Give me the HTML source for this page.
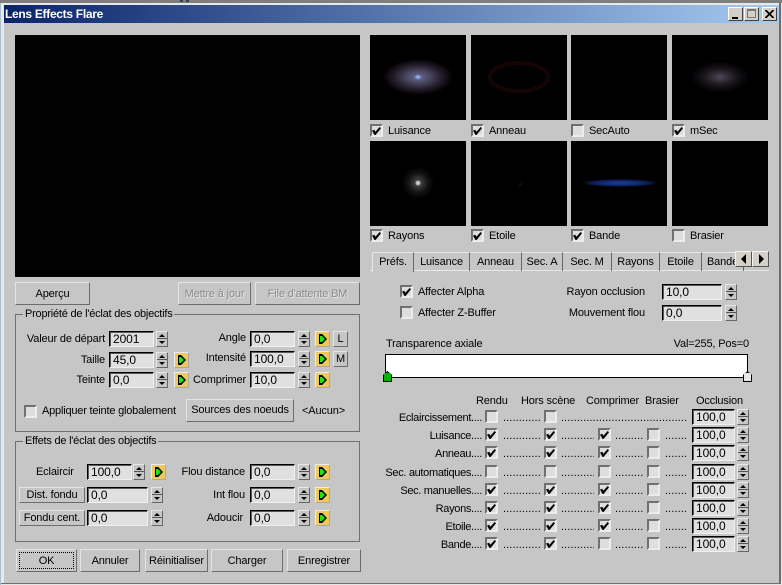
<!DOCTYPE html>
<html><head><meta charset="utf-8"><title>Lens Effects Flare</title>
<style>
html,body{margin:0;padding:0;background:#c6c6c6}
body{position:relative;width:782px;height:585px;overflow:hidden;font:11px "Liberation Sans",sans-serif;color:#000;letter-spacing:-.15px}
div,span,i,b,u{position:absolute;display:block;box-sizing:border-box;font-style:normal;font-weight:normal;text-decoration:none}
.t{white-space:nowrap;line-height:14px;height:14px}
.r{text-align:right}
.w{margin-top:1px;letter-spacing:-.32px}
.bk{background:#000}
.btn{background:#c6c6c6;border:1px solid;border-color:#e4e4e4 #6c6c6c #6c6c6c #e4e4e4;text-align:center;white-space:nowrap;height:23px;line-height:22px}
.dis{color:#8a8a8a;text-shadow:1px 1px 0 #e8e8e8}
.sm{height:16px;line-height:14px}
.f{height:16px;background:#e0e0e0;border:1px solid;border-color:#000 #f0f0f0 #f0f0f0 #000;box-shadow:inset 1px 1px 0 #5a5a5a;line-height:15px;padding-left:3px;font-size:12px;letter-spacing:-.1px;white-space:nowrap;overflow:hidden}
.s{width:12px;height:16px;background:linear-gradient(#c6c6c6 0,#c6c6c6 6px,#555 6px,#555 7px,#c6c6c6 7px);border:1px solid;border-color:#e8e8e8 #666 #666 #e8e8e8}
.s::before{content:"";position:absolute;left:2px;top:2px;border:3px solid transparent;border-top:0;border-bottom:3px solid #000}
.s::after{content:"";position:absolute;left:2px;bottom:2px;border:3px solid transparent;border-bottom:0;border-top:3px solid #000}
.a{width:15px;height:16px;background:#f0c860;border:1px solid;border-color:#ececec #a8a8a8 #a8a8a8 #ececec}
.a::before{content:"";position:absolute;left:3px;top:2px;width:8px;height:10px;background:#000;clip-path:polygon(0 0,40% 0,100% 50%,40% 100%,0 100%)}
.a::after{content:"";position:absolute;left:4px;top:4px;width:5px;height:6px;background:#18e818;clip-path:polygon(0 0,40% 0,100% 50%,40% 100%,0 100%)}
.c{width:13px;height:13px;background:#dedede;border:2px solid;border-color:#707070 #ececec #ececec #707070}
.c.on::after{content:"";position:absolute;left:0;top:1px;width:9px;height:8px;background:#000;clip-path:polygon(0 45%,25% 35%,38% 60%,85% 0,100% 15%,40% 100%,28% 100%)}
.g{border:1px solid #707070}
.lg{background:#c6c6c6;padding:0 2px;left:7px;top:-8px;letter-spacing:-.22px}
.tab{height:19px;top:252px;line-height:18px;text-align:center;border-top:1px solid #e8e8e8;border-left:1px solid #e8e8e8;border-right:1px solid #666;white-space:nowrap;overflow:hidden;border-radius:2px 2px 0 0}
.d{margin-top:1px;letter-spacing:.1px;overflow:hidden;white-space:nowrap;line-height:14px;height:14px}
.ar{background:#d4d0c8;border:1px solid;border-color:#f4f4f4 #555 #555 #f4f4f4;width:17px;height:16px;top:251px}
</style></head><body>
<!-- window frame -->
<div style="left:0;top:0;width:782px;height:3px;background:#7e7e7e"></div>
<div style="left:180px;top:0;width:3px;height:2px;background:#3c3c50"></div>
<div style="left:186px;top:0;width:3px;height:2px;background:#3c3c50"></div>
<div style="left:1px;top:3px;width:778px;height:2px;background:#e8e8e8"></div>
<div style="left:1px;top:3px;width:3px;height:580px;background:#e8e8e8"></div>
<div style="left:0;top:3px;width:1px;height:582px;background:#a8c0c8"></div>
<div style="left:779px;top:3px;width:2px;height:581px;background:#6e6e6e"></div>
<div style="left:781px;top:3px;width:1px;height:582px;background:#e4e4e4"></div>
<div style="left:1px;top:583px;width:780px;height:1px;background:#6e6e6e"></div>
<div style="left:1px;top:584px;width:781px;height:1px;background:#e4e4e4"></div>
<!-- title -->
<div style="left:4px;top:5px;width:775px;height:18px;background:linear-gradient(90deg,#0a246a,#a6caf0)"></div>
<div class="t" style="left:5px;top:7px;color:#fff;font-weight:bold;font-size:12px;letter-spacing:-.3px">Lens Effects Flare</div>
<div style="left:728px;top:7px;width:15px;height:14px;background:#d4d0c8;border:1px solid;border-color:#fff #404040 #404040 #fff"><span style="left:3px;top:9px;width:6px;height:2px;background:#000"></span></div>
<div style="left:744px;top:7px;width:15px;height:14px;background:#d4d0c8;border:1px solid;border-color:#fff #404040 #404040 #fff"><span style="left:2px;top:1px;width:9px;height:9px;border:1px solid #777;border-top-width:2px"></span></div>
<div style="left:762px;top:7px;width:15px;height:14px;background:#d4d0c8;border:1px solid;border-color:#fff #404040 #404040 #fff"><svg style="position:absolute;left:2px;top:2px" width="9" height="8"><path d="M0 0L8 8M1 0L9 8M8 0L0 8M9 0L1 8" stroke="#000" stroke-width="1"/></svg></div>

<!-- preview -->
<div class="bk" style="left:15px;top:35px;width:345px;height:242px;background:#020202"></div>

<!-- thumbs -->
<div class="bk" style="left:370px;top:35px;width:96px;height:85px;background:radial-gradient(ellipse 4px 3px at 48px 42px,#a8d0f0 0,rgba(120,150,210,.7) 60%,transparent 100%),radial-gradient(ellipse 35px 18px at 48px 42px,#7070a0 0,#5c5a80 15%,#454258 38%,#26202e 65%,#0e0a10 88%,#000 100%)"></div>
<div class="bk" style="left:471px;top:35px;width:96px;height:85px"><svg width="96" height="85" style="position:absolute;left:0;top:0"><ellipse cx="48" cy="42" rx="29" ry="14" fill="none" stroke="#140404" stroke-width="4"/></svg></div>
<div class="bk" style="left:571px;top:35px;width:96px;height:85px"></div>
<div class="bk" style="left:672px;top:35px;width:96px;height:85px;background:radial-gradient(ellipse 30px 16px at 48px 42px,#4a4a62 0,#38343f 20%,#1c181e 50%,#0a080c 78%,#000 100%)"></div>
<div class="bk" style="left:370px;top:141px;width:96px;height:85px;background:radial-gradient(circle 3px at 48px 42px,#e8e8e8 0,#b0b0b0 60%,transparent 100%),radial-gradient(circle 16px at 48px 42px,#606060 0,#383838 25%,#141414 60%,#000 100%)"></div>
<div class="bk" style="left:471px;top:141px;width:96px;height:85px"><span style="left:48px;top:42px;width:3px;height:3px;background:#0e0e0e"></span></div>
<div class="bk" style="left:571px;top:141px;width:96px;height:85px;background:radial-gradient(ellipse 38px 4px at 49px 42px,#1c3c90 0,#14307c 40%,#0a1a4a 78%,#000 100%)"></div>
<div class="bk" style="left:672px;top:141px;width:96px;height:85px"></div>

<i class="c on" style="left:370px;top:124px"></i><div class="t" style="left:388px;top:124px">Luisance</div>
<i class="c on" style="left:471px;top:124px"></i><div class="t" style="left:489px;top:124px">Anneau</div>
<i class="c" style="left:571px;top:124px"></i><div class="t" style="left:589px;top:124px">SecAuto</div>
<i class="c on" style="left:672px;top:124px"></i><div class="t" style="left:690px;top:124px">mSec</div>
<i class="c on" style="left:370px;top:229px"></i><div class="t" style="left:388px;top:229px">Rayons</div>
<i class="c on" style="left:471px;top:229px"></i><div class="t" style="left:489px;top:229px">Etoile</div>
<i class="c on" style="left:571px;top:229px"></i><div class="t" style="left:589px;top:229px">Bande</div>
<i class="c" style="left:672px;top:229px"></i><div class="t" style="left:690px;top:229px">Brasier</div>

<!-- tabs -->
<div style="left:370px;top:270px;width:399px;height:1px;background:#e8e8e8"></div>
<div class="tab" style="left:372px;width:42px;height:20px;background:#c6c6c6">Préfs.</div>
<div class="tab" style="left:414px;width:56px;border-left:0">Luisance</div>
<div class="tab" style="left:470px;width:52px;border-left:0">Anneau</div>
<div class="tab" style="left:522px;width:41px;border-left:0">Sec. A</div>
<div class="tab" style="left:563px;width:49px;border-left:0">Sec. M</div>
<div class="tab" style="left:612px;width:48px;border-left:0">Rayons</div>
<div class="tab" style="left:660px;width:42px;border-left:0">Etoile</div>
<div class="tab" style="left:702px;width:42px;border-left:0;text-align:left;padding-left:5px">Bande</div>
<div class="ar" style="left:735px"><span style="left:5px;top:2px;border:5px solid transparent;border-left:0;border-right:5px solid #000"></span></div>
<div class="ar" style="left:752px"><span style="left:6px;top:2px;border:5px solid transparent;border-right:0;border-left:5px solid #000"></span></div>

<!-- preview buttons -->
<div class="btn" style="left:15px;top:282px;width:75px;line-height:23px">Aperçu</div>
<div class="btn dis" style="left:178px;top:282px;width:73px;line-height:23px">Mettre à jour</div>
<div class="btn dis" style="left:255px;top:282px;width:105px;line-height:23px">File d'attente BM</div>

<!-- group 1 -->
<div class="g" style="left:15px;top:314px;width:345px;height:118px"><span class="t lg">Propriété de l'éclat des objectifs</span></div>
<div class="t r" style="left:15px;top:332px;width:90px">Valeur de départ</div>
<b class="f" style="left:109px;top:331px;width:45px">2001</b><i class="s" style="left:156px;top:331px"></i>
<div class="t r" style="left:15px;top:353px;width:90px">Taille</div>
<b class="f" style="left:109px;top:352px;width:45px">45,0</b><i class="s" style="left:156px;top:352px"></i><i class="a" style="left:174px;top:352px"></i>
<div class="t r" style="left:15px;top:373px;width:90px">Teinte</div>
<b class="f" style="left:109px;top:372px;width:45px">0,0</b><i class="s" style="left:156px;top:372px"></i><i class="a" style="left:174px;top:372px"></i>

<div class="t r" style="left:186px;top:331px;width:60px">Angle</div>
<b class="f" style="left:250px;top:331px;width:45px">0,0</b><i class="s" style="left:298px;top:331px"></i><i class="a" style="left:315px;top:331px"></i>
<div class="btn sm" style="left:333px;top:331px;width:15px">L</div>
<div class="t r" style="left:186px;top:351px;width:60px">Intensité</div>
<b class="f" style="left:250px;top:351px;width:45px">100,0</b><i class="s" style="left:298px;top:351px"></i><i class="a" style="left:315px;top:351px"></i>
<div class="btn sm" style="left:333px;top:351px;width:15px">M</div>
<div class="t r" style="left:186px;top:373px;width:60px">Comprimer</div>
<b class="f" style="left:250px;top:372px;width:45px">10,0</b><i class="s" style="left:298px;top:372px"></i><i class="a" style="left:315px;top:372px"></i>

<i class="c" style="left:24px;top:405px"></i>
<div class="t" style="left:42px;top:404px;letter-spacing:-.2px">Appliquer teinte globalement</div>
<div class="btn" style="left:186px;top:399px;width:108px;line-height:20px">Sources des noeuds</div>
<div class="t" style="left:302px;top:404px">&lt;Aucun&gt;</div>

<!-- group 2 -->
<div class="g" style="left:15px;top:441px;width:345px;height:101px"><span class="t lg">Effets de l'éclat des objectifs</span></div>
<div class="t" style="left:36px;top:465px">Eclaircir</div>
<b class="f" style="left:87px;top:464px;width:45px">100,0</b><i class="s" style="left:133px;top:464px"></i><i class="a" style="left:151px;top:464px"></i>
<div class="btn sm" style="left:19px;top:487px;width:66px">Dist. fondu</div>
<b class="f" style="left:87px;top:487px;width:61px">0,0</b><i class="s" style="left:151px;top:487px"></i>
<div class="btn sm" style="left:19px;top:510px;width:66px">Fondu cent.</div>
<b class="f" style="left:87px;top:510px;width:61px">0,0</b><i class="s" style="left:151px;top:510px"></i>
<div class="t r" style="left:165px;top:465px;width:80px">Flou distance</div>
<b class="f" style="left:250px;top:464px;width:45px">0,0</b><i class="s" style="left:298px;top:464px"></i><i class="a" style="left:315px;top:464px"></i>
<div class="t r" style="left:165px;top:488px;width:80px">Int flou</div>
<b class="f" style="left:250px;top:487px;width:45px">0,0</b><i class="s" style="left:298px;top:487px"></i><i class="a" style="left:315px;top:487px"></i>
<div class="t r" style="left:165px;top:511px;width:78px">Adoucir</div>
<b class="f" style="left:250px;top:510px;width:45px">0,0</b><i class="s" style="left:298px;top:510px"></i><i class="a" style="left:315px;top:510px"></i>

<!-- bottom buttons -->
<div class="btn" style="left:16px;top:549px;width:61px"><span style="left:2px;top:2px;width:55px;height:17px;border:1px dotted #000"></span>OK</div>
<div class="btn" style="left:80px;top:549px;width:60px">Annuler</div>
<div class="btn" style="left:145px;top:549px;width:63px">Réinitialiser</div>
<div class="btn" style="left:211px;top:549px;width:72px">Charger</div>
<div class="btn" style="left:287px;top:549px;width:74px">Enregistrer</div>

<!-- prefs -->
<i class="c on" style="left:400px;top:285px"></i><div class="t" style="left:418px;top:285px">Affecter Alpha</div>
<i class="c" style="left:400px;top:306px"></i><div class="t" style="left:418px;top:306px">Affecter Z-Buffer</div>
<div class="t r" style="left:540px;top:285px;width:105px">Rayon occlusion</div>
<b class="f" style="left:662px;top:284px;width:60px">10,0</b><i class="s" style="left:725px;top:284px"></i>
<div class="t r" style="left:540px;top:306px;width:105px">Mouvement flou</div>
<b class="f" style="left:662px;top:305px;width:60px">0,0</b><i class="s" style="left:725px;top:305px"></i>

<div class="t" style="left:386px;top:337px">Transparence axiale</div>
<div class="t r" style="left:640px;top:337px;width:109px">Val=255, Pos=0</div>
<div style="left:385px;top:354px;width:363px;height:24px;background:#fff;border:1px solid #000"></div>
<div style="left:383px;top:371px;width:9px;height:11px;background:#000;clip-path:polygon(50% 0,100% 35%,100% 100%,0 100%,0 35%)"><span style="left:1px;top:2px;width:7px;height:8px;background:#00b400"></span></div>
<div style="left:743px;top:371px;width:9px;height:11px;background:#000;clip-path:polygon(50% 0,100% 35%,100% 100%,0 100%,0 35%)"><span style="left:1px;top:2px;width:7px;height:8px;background:#e8e8e8"></span></div>

<!-- table header -->
<div class="t" style="left:476px;top:394px">Rendu</div>
<div class="t" style="left:521px;top:394px">Hors scène</div>
<div class="t" style="left:586px;top:394px">Comprimer</div>
<div class="t" style="left:645px;top:394px">Brasier</div>
<div class="t" style="left:696px;top:394px">Occlusion</div>

<!-- row 1 -->
<div class="t r w" style="left:370px;top:410px;width:112px">Eclaircissement....</div>
<i class="c" style="left:485px;top:410px"></i><i class="c" style="left:544px;top:410px"></i>
<div class="d" style="left:503px;top:410px;width:38px">..............................</div>
<div class="d" style="left:561px;top:410px;width:127px">........................................................................</div>
<b class="f" style="left:692px;top:409px;width:43px">100,0</b><i class="s" style="left:737px;top:409px"></i>

<!-- row 2 -->
<div class="t r w" style="left:370px;top:428px;width:112px">Luisance....</div>
<i class="c on" style="left:485px;top:428px"></i><i class="c on" style="left:544px;top:428px"></i><i class="c on" style="left:598px;top:428px"></i><i class="c" style="left:647px;top:428px"></i>
<div class="d" style="left:503px;top:428px;width:38px">..............................</div><div class="d" style="left:561px;top:428px;width:33px">..............................</div><div class="d" style="left:615px;top:428px;width:28px">..............................</div><div class="d" style="left:665px;top:428px;width:23px">..............................</div>
<b class="f" style="left:692px;top:427px;width:43px">100,0</b><i class="s" style="left:737px;top:427px"></i>

<!-- row 3 -->
<div class="t r w" style="left:370px;top:446px;width:112px">Anneau....</div>
<i class="c on" style="left:485px;top:446px"></i><i class="c on" style="left:544px;top:446px"></i><i class="c on" style="left:598px;top:446px"></i><i class="c" style="left:647px;top:446px"></i>
<div class="d" style="left:503px;top:446px;width:38px">..............................</div><div class="d" style="left:561px;top:446px;width:33px">..............................</div><div class="d" style="left:615px;top:446px;width:28px">..............................</div><div class="d" style="left:665px;top:446px;width:23px">..............................</div>
<b class="f" style="left:692px;top:445px;width:43px">100,0</b><i class="s" style="left:737px;top:445px"></i>

<!-- row 4 -->
<div class="t r w" style="left:370px;top:465px;width:112px">Sec. automatiques....</div>
<i class="c" style="left:485px;top:465px"></i><i class="c" style="left:544px;top:465px"></i><i class="c" style="left:598px;top:465px"></i><i class="c" style="left:647px;top:465px"></i>
<div class="d" style="left:503px;top:465px;width:38px">..............................</div><div class="d" style="left:561px;top:465px;width:33px">..............................</div><div class="d" style="left:615px;top:465px;width:28px">..............................</div><div class="d" style="left:665px;top:465px;width:23px">..............................</div>
<b class="f" style="left:692px;top:464px;width:43px">100,0</b><i class="s" style="left:737px;top:464px"></i>

<!-- row 5 -->
<div class="t r w" style="left:370px;top:483px;width:112px">Sec. manuelles....</div>
<i class="c on" style="left:485px;top:483px"></i><i class="c on" style="left:544px;top:483px"></i><i class="c on" style="left:598px;top:483px"></i><i class="c" style="left:647px;top:483px"></i>
<div class="d" style="left:503px;top:483px;width:38px">..............................</div><div class="d" style="left:561px;top:483px;width:33px">..............................</div><div class="d" style="left:615px;top:483px;width:28px">..............................</div><div class="d" style="left:665px;top:483px;width:23px">..............................</div>
<b class="f" style="left:692px;top:482px;width:43px">100,0</b><i class="s" style="left:737px;top:482px"></i>

<!-- row 6 -->
<div class="t r w" style="left:370px;top:501px;width:112px">Rayons....</div>
<i class="c on" style="left:485px;top:501px"></i><i class="c on" style="left:544px;top:501px"></i><i class="c on" style="left:598px;top:501px"></i><i class="c" style="left:647px;top:501px"></i>
<div class="d" style="left:503px;top:501px;width:38px">..............................</div><div class="d" style="left:561px;top:501px;width:33px">..............................</div><div class="d" style="left:615px;top:501px;width:28px">..............................</div><div class="d" style="left:665px;top:501px;width:23px">..............................</div>
<b class="f" style="left:692px;top:500px;width:43px">100,0</b><i class="s" style="left:737px;top:500px"></i>

<!-- row 7 -->
<div class="t r w" style="left:370px;top:519px;width:112px">Etoile....</div>
<i class="c on" style="left:485px;top:519px"></i><i class="c on" style="left:544px;top:519px"></i><i class="c on" style="left:598px;top:519px"></i><i class="c" style="left:647px;top:519px"></i>
<div class="d" style="left:503px;top:519px;width:38px">..............................</div><div class="d" style="left:561px;top:519px;width:33px">..............................</div><div class="d" style="left:615px;top:519px;width:28px">..............................</div><div class="d" style="left:665px;top:519px;width:23px">..............................</div>
<b class="f" style="left:692px;top:518px;width:43px">100,0</b><i class="s" style="left:737px;top:518px"></i>

<!-- row 8 -->
<div class="t r w" style="left:370px;top:537px;width:112px">Bande....</div>
<i class="c on" style="left:485px;top:537px"></i><i class="c on" style="left:544px;top:537px"></i><i class="c" style="left:598px;top:537px"></i><i class="c" style="left:647px;top:537px"></i>
<div class="d" style="left:503px;top:537px;width:38px">..............................</div><div class="d" style="left:561px;top:537px;width:33px">..............................</div><div class="d" style="left:615px;top:537px;width:28px">..............................</div><div class="d" style="left:665px;top:537px;width:23px">..............................</div>
<b class="f" style="left:692px;top:536px;width:43px">100,0</b><i class="s" style="left:737px;top:536px"></i>
</body></html>
